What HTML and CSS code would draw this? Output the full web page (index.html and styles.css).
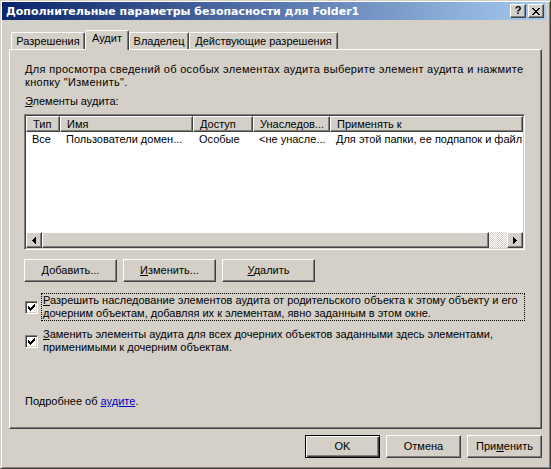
FILE: index.html
```html
<!DOCTYPE html>
<html lang="ru">
<head>
<meta charset="utf-8">
<title>Дополнительные параметры безопасности для Folder1</title>
<link rel="stylesheet" href="styles.css">
</head>
<body>
<div class="window">
  <div class="titlebar">
    <span class="title">Дополнительные параметры безопасности для Folder1</span>
    <div class="tb-btns">
      <span class="tb-btn help">?</span>
      <span class="tb-btn close"><svg width="8" height="7" viewBox="0 0 8 7" shape-rendering="crispEdges"><path d="M0 0h2v1h-2z M6 0h2v1h-2z M1 1h2v1h-2z M5 1h2v1h-2z M2 2h4v1h-4z M3 3h2v1h-2z M2 4h4v1h-4z M1 5h2v1h-2z M5 5h2v1h-2z M0 6h2v1h-2z M6 6h2v1h-2z" fill="#000"/></svg></span>
    </div>
  </div>
  <div class="client">
    <div class="tabs">
      <div class="tab t1">Разрешения</div>
      <div class="tab t2 active">Аудит</div>
      <div class="tab t3">Владелец</div>
      <div class="tab t4">Действующие разрешения</div>
    </div>
    <div class="panel">
      <p class="intro">Для просмотра сведений об особых элементах аудита выберите элемент аудита и нажмите<br>кнопку "Изменить".</p>
      <div class="label"><u>Э</u>лементы аудита:</div>
      <div class="listview">
        <div class="lv-head">
          <div class="th c1">Тип</div>
          <div class="th c2">Имя</div>
          <div class="th c3">Доступ</div>
          <div class="th c4">Унаследов...</div>
          <div class="th c5">Применять к</div>
        </div>
        <div class="lv-row">
          <div class="td c1">Все</div>
          <div class="td c2">Пользователи домен...</div>
          <div class="td c3">Особые</div>
          <div class="td c4">&lt;не унасле...</div>
          <div class="td c5">Для этой папки, ее подпапок и файл</div>
        </div>
        <div class="lv-fill"></div>
        <div class="hscroll">
          <div class="sb-btn"><svg width="4" height="7" viewBox="0 0 4 7" shape-rendering="crispEdges"><path d="M0 3h1v1h-1z M1 2h1v3h-1z M2 1h1v5h-1z M3 0h1v7h-1z" fill="#000"/></svg></div>
          <div class="sb-thumb"></div>
          <div class="sb-track"></div>
          <div class="sb-btn"><svg width="4" height="7" viewBox="0 0 4 7" shape-rendering="crispEdges"><path d="M3 3h1v1h-1z M2 2h1v3h-1z M1 1h1v5h-1z M0 0h1v7h-1z" fill="#000"/></svg></div>
        </div>
      </div>
      <div class="btnrow">
        <button class="btn wide"><u>Д</u>обавить...</button>
        <button class="btn wide"><u>И</u>зменить...</button>
        <button class="btn wide"><u>У</u>далить</button>
      </div>
      <div class="check first">
        <span class="cb"><svg width="7" height="7" viewBox="0 0 7 7" shape-rendering="crispEdges"><path d="M0 2h1v3h-1z M1 3h1v3h-1z M2 4h1v3h-1z M3 3h1v3h-1z M4 2h1v3h-1z M5 1h1v3h-1z M6 0h1v3h-1z" fill="#000"/></svg></span>
        <span class="cb-text focus"><u>Р</u>азрешить наследование элементов аудита от родительского объекта к этому объекту и его<br>дочерним объектам, добавляя их к элементам, явно заданным в этом окне.</span>
      </div>
      <div class="check second">
        <span class="cb"><svg width="7" height="7" viewBox="0 0 7 7" shape-rendering="crispEdges"><path d="M0 2h1v3h-1z M1 3h1v3h-1z M2 4h1v3h-1z M3 3h1v3h-1z M4 2h1v3h-1z M5 1h1v3h-1z M6 0h1v3h-1z" fill="#000"/></svg></span>
        <span class="cb-text"><u>З</u>аменить элементы аудита для всех дочерних объектов заданными здесь элементами,<br>применимыми к дочерним объектам.</span>
      </div>
      <div class="more">Подробнее об <a class="link" href="#">аудите</a>.</div>
    </div>
    <div class="footer">
      <button class="btn default">OK</button>
      <button class="btn">Отмена</button>
      <button class="btn">При<u>м</u>енить</button>
    </div>
  </div>
</div>
</body>
</html>
```
FILE: styles.css
```css
* { box-sizing: border-box; }

body {
  margin: 0;
  font-family: "Liberation Sans", Arial, sans-serif;
  font-size: 11px;
  line-height: 13px;
  color: #000;
  background: #d4d0c8;
}

u { text-decoration: underline; text-underline-offset: 1px; }

.window {
  width: 551px;
  height: 469px;
  display: flex;
  flex-direction: column;
  background: #d4d0c8;
  border: 1px solid;
  border-color: #d4d0c8 #404040 #404040 #d4d0c8;
  box-shadow: inset 1px 1px #fff, inset -1px -1px #808080;
  padding: 1px 4px 10px 1px;
}

.titlebar {
  height: 18px;
  flex: none;
  display: flex;
  align-items: center;
  background: linear-gradient(to right, #0a246a, #a6caf0);
  color: #fff;
  padding: 0 2px 0 4px;
}

.title {
  flex: 1;
  white-space: nowrap;
  font-family: "DejaVu Sans", "Liberation Sans", sans-serif;
  font-weight: bold;
  font-size: 11px;
}

.tb-btns { display: flex; gap: 2px; }

.tb-btn {
  width: 16px;
  height: 14px;
  display: flex;
  align-items: center;
  justify-content: center;
  background: #d4d0c8;
  color: #000;
  border: 1px solid;
  border-color: #fff #404040 #404040 #fff;
  box-shadow: inset -1px -1px #808080;
  font-weight: bold;
  font-size: 11px;
}

.tb-btn.help { padding-bottom: 1px; }

.client {
  flex: 1;
  display: flex;
  flex-direction: column;
  padding: 10px 4px 0 7px;
}

.tabs {
  height: 19px;
  flex: none;
  display: flex;
  align-items: flex-end;
  padding-left: 2px;
  position: relative;
  z-index: 1;
}

.tab {
  height: 17px;
  display: flex;
  align-items: center;
  justify-content: center;
  white-space: nowrap;
  background: #d4d0c8;
  border: 1px solid;
  border-bottom: none;
  border-color: #fff #404040 transparent #fff;
  box-shadow: inset -1px 0 #808080;
  border-radius: 2px 2px 0 0;
}

.tab.active {
  height: 20px;
  margin-bottom: -1px;
  align-items: flex-start;
  padding-top: 1px;
}

.t1 { width: 74px; }
.t2 { width: 44px; }
.t3 { width: 60px; }
.t4 { width: 149px; }

.panel {
  flex: 1;
  display: flex;
  flex-direction: column;
  border: 1px solid;
  border-color: #fff #404040 #404040 #fff;
  box-shadow: inset -1px -1px #808080;
  padding: 13px 16px 20px 14px;
}

.intro {
  margin: 0;
  white-space: nowrap;
  padding-left: 1px;
  letter-spacing: 0.32px;
}

.label { margin-top: 6px; padding-left: 1px; }

.listview {
  margin-top: 6px;
  height: 136px;
  flex: none;
  display: flex;
  flex-direction: column;
  background: #fff;
  border: 1px solid;
  border-color: #808080 #fff #fff #808080;
  box-shadow: inset 1px 1px #404040, inset -1px -1px #d4d0c8;
  padding: 1px;
  overflow: hidden;
}

.lv-head, .lv-row { display: flex; flex: none; }

.th {
  height: 16px;
  line-height: 14px;
  padding-left: 6px;
  white-space: nowrap;
  overflow: hidden;
  background: #d4d0c8;
  border: 1px solid;
  border-color: #fff #404040 #404040 #fff;
  box-shadow: inset -1px -1px #808080;
}

.td {
  height: 14px;
  line-height: 14px;
  padding-left: 6px;
  white-space: nowrap;
  overflow: hidden;
}

.c1 { width: 34px; flex: none; }
.c2 { width: 133px; flex: none; }
.c3 { width: 60px; flex: none; }
.c4 { width: 77px; flex: none; }
.c5 { flex: 1; min-width: 0; }

.lv-fill { flex: 1; }

.hscroll { height: 16px; flex: none; display: flex; }

.sb-btn, .sb-thumb {
  background: #d4d0c8;
  border: 1px solid;
  border-color: #fff #404040 #404040 #fff;
  box-shadow: inset -1px -1px #808080;
}

.sb-btn {
  width: 16px;
  display: flex;
  align-items: center;
  justify-content: center;
}

.sb-thumb { width: 447px; }

.sb-track {
  flex: 1;
  background: repeating-conic-gradient(#fff 0 25%, #d4d0c8 0 50%) 0 0 / 2px 2px;
}

.btn {
  font: inherit;
  color: #000;
  height: 23px;
  width: 75px;
  padding: 0;
  background: #d4d0c8;
  border: 1px solid;
  border-color: #fff #404040 #404040 #fff;
  box-shadow: inset -1px -1px #808080;
  line-height: 13px;
}

.btn.wide { width: 93px; }

.btn.default {
  border: 1px solid #000;
  box-shadow: inset 1px 1px #fff, inset -1px -1px #404040, inset -2px -2px #808080;
}

.btnrow {
  margin-top: 9px;
  display: flex;
  gap: 6px;
}

.check {
  display: flex;
  align-items: center;
}

.check.first { margin-top: 11px; }
.check.second { margin-top: 6px; }

.cb {
  width: 13px;
  height: 13px;
  flex: none;
  margin-left: 1px;
  margin-right: 3px;
  display: flex;
  align-items: center;
  justify-content: center;
  background: #fff;
  border: 1px solid;
  border-color: #808080 #fff #fff #808080;
  box-shadow: inset 1px 1px #404040, inset -1px -1px #d4d0c8;
}

.cb-text {
  flex: 1;
  white-space: nowrap;
  border: 1px solid transparent;
  padding: 0 1px;
}

.cb-text.focus { border: 1px dotted #000; }

.more { margin-top: auto; padding-left: 1px; }

.link { color: #0000cc; text-decoration: underline; }

.footer {
  flex: none;
  display: flex;
  justify-content: flex-end;
  gap: 6px;
  margin-top: 6px;
}
```
